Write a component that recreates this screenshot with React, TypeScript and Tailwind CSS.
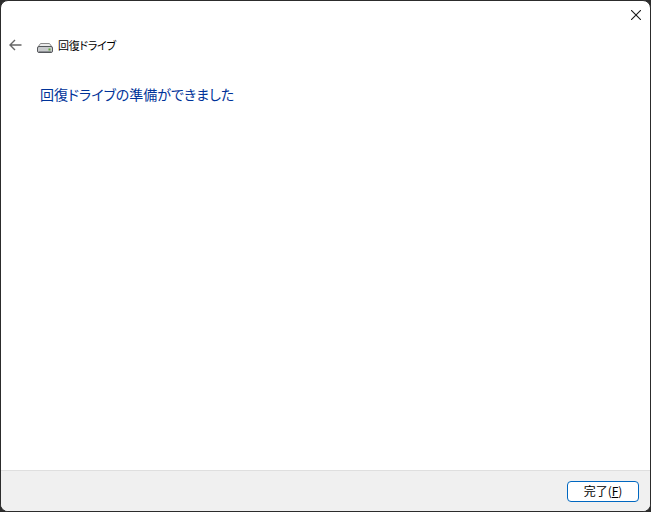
import React from 'react';

const FONT = "font-['Noto_Sans_CJK_JP','Noto_Sans_CJK_SC',sans-serif]";

function DriveIcon() {
  return (
    <svg width="16" height="16" viewBox="0 0 16 16" className="shrink-0">
      <path d="M3.5 4.5 H12.5 L15 8 H1 Z" fill="#ececec" stroke="#8a8a8a" strokeWidth="1" />
      <rect x="0.5" y="7.5" width="15" height="6" rx="1.5" fill="#c9cbcd" stroke="#55585c" strokeWidth="1" />
      <rect x="2" y="12" width="12" height="1" fill="#8d9094" />
      <rect x="11.5" y="9.5" width="2" height="2" fill="#5fa83a" />
    </svg>
  );
}

export default function App() {
  return (
    <div className={`w-[651px] h-[512px] bg-[#2c2c2c] ${FONT} [font-feature-settings:'palt']`}>
      <div className="w-full h-full flex flex-col bg-white border border-[#2c2c2c] rounded-lg overflow-hidden">
        {/* Title bar */}
        <div className="h-[29px] flex justify-end shrink-0">
          <button className="w-[28px] h-[28px] flex items-center justify-center">
            <svg width="10" height="10" viewBox="0 0 10 10">
              <path d="M0 0 L10 10 M10 0 L0 10" stroke="#1a1a1a" strokeWidth="1.1" fill="none" />
            </svg>
          </button>
        </div>

        {/* Nav row */}
        <div className="h-[30px] flex items-center shrink-0">
          <button className="w-[13px] ml-[8px] flex items-center">
            <svg width="13" height="12" viewBox="0 0 13 12">
              <path d="M12.5 6 H1 M6 1 L1 6 L6 11" stroke="#666666" strokeWidth="1.4" fill="none" />
            </svg>
          </button>
          <div className="ml-[15px] mt-[3px]">
            <DriveIcon />
          </div>
          <span className="ml-[5px] text-[11px] leading-[16px] tracking-[-0.3px] text-black">回復ドライブ</span>
        </div>

        {/* Content */}
        <div className="flex-1 pl-[39px] pt-[24px]">
          <h1 className="text-[14px] leading-[20px] font-normal text-[#003399]">回復ドライブの準備ができました</h1>
        </div>

        {/* Footer */}
        <div className="h-[41px] shrink-0 flex items-center justify-end bg-[#f0f0f0] border-t border-[#dfdfdf] pr-[11px]">
          <button className="w-[72px] h-[21px] bg-white border border-[#0067c0] rounded text-[12px] leading-[16px] text-black flex items-center justify-center">
            完了(<span className="underline">F</span>)
          </button>
        </div>
      </div>
    </div>
  );
}
